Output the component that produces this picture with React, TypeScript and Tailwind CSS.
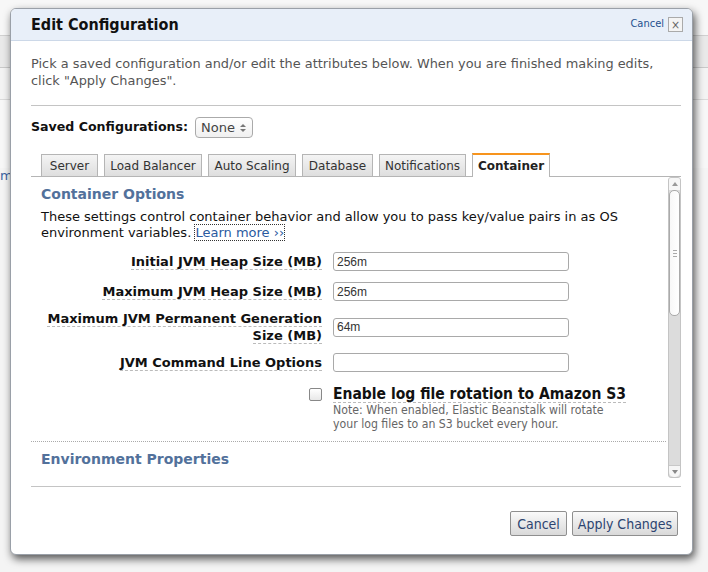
import React from "react";

const V = { fontFamily: '"DejaVu Sans", Verdana, sans-serif' };
const T = { fontFamily: '"DejaVu Sans Condensed", "DejaVu Sans", Tahoma, sans-serif', fontStretch: "condensed" as const };

function Field({ label, value, two }: { label: React.ReactNode; value: string; two?: boolean }) {
  return (
    <div className={`flex items-center ${two ? "-my-[2px]" : ""}`}>
      <div className={`w-[281px] text-right text-[13px] ${two ? "leading-[17px]" : "leading-[16px]"}`} style={V}>
        <span className="font-bold text-[#111] border-b border-dashed border-[#bbb]">{label}</span>
      </div>
      <div
        className="ml-[11px] w-[236px] h-[19px] border border-[#a9a9a9] rounded-[3px] bg-white flex items-center px-[3px] text-[12px] leading-none text-[#333]"
        style={{ fontFamily: '"Liberation Sans", Arial, sans-serif' }}
      >
        {value}
      </div>
    </div>
  );
}

function Tab({ label, w, active }: { label: string; w: number; active?: boolean }) {
  if (active)
    return (
      <div
        className="h-[24px] -mb-px flex items-center justify-center bg-white border border-[#b5b5b5] border-b-0 border-t-2 border-t-[#f7941d] text-[12px] font-bold text-[#222]"
        style={{ ...V, width: w }}
      >
        {label}
      </div>
    );
  return (
    <div
      className="h-[22px] flex items-center justify-center bg-gradient-to-b from-[#f4f4f4] to-[#dedede] border border-[#b5b5b5] border-b-0 text-[12px] text-[#333]"
      style={{ ...V, width: w }}
    >
      {label}
    </div>
  );
}

export default function App() {
  return (
    <div className="relative w-[708px] h-[572px] overflow-hidden bg-[#f4f4f4]">
      {/* background page */}
      <div className="flex flex-col">
        <div className="h-[36px] bg-[#f7f7f7] border-b border-[#d0d0d0]" />
        <div className="h-[32px] bg-[#e9e9e9] border-b border-[#c9c9c9]" />
        <div className="h-[32px] bg-[#f3f3f3] border-b border-[#dadada]" />
        <div className="h-[68px] bg-[#f7f7f7]" />
        <div className="text-[13px] text-[#3a62a0] leading-[16px]" style={V}>
          m
        </div>
      </div>

      {/* dialog */}
      <div className="absolute left-[10px] top-[8px] w-[683px] h-[547px] bg-white rounded-[6px] border border-[#9aa0a8] shadow-[2px_4px_8px_rgba(0,0,0,0.65)] overflow-hidden flex flex-col">
        <div className="h-[32px] shrink-0 bg-[#e8eff9] border-b border-[#ccd8e8] flex items-center pl-[20px] pr-[9px]">
          <div className="text-[16px] font-bold text-[#111] flex-1" style={T}>
            Edit Configuration
          </div>
          <span className="text-[11px] text-[#1f4f8f] mr-[4px]" style={T}>
            Cancel
          </span>
          <span className="w-[15px] h-[15px] border border-[#aaa] bg-[#f4f4f4] flex items-center justify-center text-[12px] leading-none text-[#666]" style={T}>
            ×
          </span>
        </div>

        <div className="pl-[20px] pr-[11px] flex flex-col flex-1">
          <p className="mt-[14px] text-[12.9px] leading-[17px] text-[#555]" style={V}>
            Pick a saved configuration and/or edit the attributes below. When you are finished making edits, click "Apply Changes".
          </p>
          <div className="mt-[16px] border-t border-[#c4c4c4]" />

          <div className="mt-[11px] flex items-center h-[21px]">
            <span className="text-[12.6px] font-bold text-[#111]" style={V}>
              Saved Configurations:
            </span>
            <div className="ml-[7px] w-[58px] h-[21px] border border-[#aaa] rounded-[4px] bg-gradient-to-b from-white to-[#f0f0f0] flex items-center pl-[5px] text-[13px] text-[#444]" style={V}>
              <span className="flex-1">None</span>
              <svg width="8" height="12" viewBox="0 0 8 12" className="mr-[5px]">
                <path d="M1 5 L4 2 L7 5 Z" fill="#777" />
                <path d="M1 7 L4 10 L7 7 Z" fill="#777" />
              </svg>
            </div>
          </div>

          <div className="mt-[16px] pl-[10px] flex items-end gap-[6px] border-b border-[#b5b5b5] h-[23px]">
            <Tab label="Server" w={57} />
            <Tab label="Load Balancer" w={98} />
            <Tab label="Auto Scaling" w={88} />
            <Tab label="Database" w={71} />
            <Tab label="Notifications" w={87} />
            <Tab label="Container" w={78} active />
          </div>

          <div className="flex h-[301px]">
            <div className="flex-1 overflow-hidden flex flex-col">
              <div className="pl-[10px] mt-[9px] text-[14px] font-bold text-[#52719b] leading-[17px]" style={V}>
                Container Options
              </div>
              <p className="pl-[10px] mt-[6px] text-[13px] leading-[16px] text-[#111]" style={V}>
                These settings control container behavior and allow you to pass key/value pairs in as OS environment variables.{" "}
                <span className="text-[#2a5aa0] outline outline-1 outline-dotted outline-[#333]">Learn more ››</span>
              </p>
              <div className="pl-[10px] mt-[11px] flex flex-col gap-[11px]">
                <Field label="Initial JVM Heap Size (MB)" value="256m" />
                <Field label="Maximum JVM Heap Size (MB)" value="256m" />
                <Field
                  label={
                    <>
                      Maximum JVM Permanent Generation
                      <br />
                      Size (MB)
                    </>
                  }
                  value="64m"
                  two
                />
                <Field label="JVM Command Line Options" value="" />
              </div>
              <div className="mt-[14px] flex pl-[278px]">
                <div className="w-[13px] h-[13px] mt-[2px] border border-[#888] rounded-[2px] bg-gradient-to-b from-white to-[#e8e8e8]" />
                <div className="ml-[11px] flex flex-col">
                  <span className="text-[15.5px] font-bold text-[#111] leading-[16px] border-b border-dashed border-[#bbb] self-start" style={T}>
                    Enable log file rotation to Amazon S3
                  </span>
                  <span className="text-[12.2px] leading-[14px] text-[#666] w-[285px]" style={T}>
                    Note: When enabled, Elastic Beanstalk will rotate your log files to an S3 bucket every hour.
                  </span>
                </div>
              </div>
              <div className="mt-[10px] mr-[2px] border-t border-dotted border-[#aaa]" />
              <div className="pl-[10px] mt-[9px] text-[14px] font-bold text-[#52719b] leading-[17px]" style={V}>
                Environment Properties
              </div>
              <p className="pl-[10px] mt-[11px] text-[13px] leading-[16px] text-[#111]" style={V}>
                Environment properties are passed in to the application as key-value pairs.
              </p>
            </div>
            {/* scrollbar */}
            <div className="w-[13px] flex flex-col border border-[#c4c4c4] rounded-[3px] bg-[#dcdcdc] overflow-hidden">
              <div className="h-[12px] bg-[#f6f6f6] flex items-center justify-center">
                <svg width="6" height="4" viewBox="0 0 6 4"><path d="M0 4 L3 0 L6 4 Z" fill="#999" /></svg>
              </div>
              <div className="h-[126px] bg-gradient-to-r from-[#f8f8f8] to-white border border-[#aaa] rounded-[5px] flex items-center justify-center">
                <div className="flex flex-col gap-[2px]">
                  <div className="w-[4px] h-px bg-[#aaa]" />
                  <div className="w-[4px] h-px bg-[#aaa]" />
                  <div className="w-[4px] h-px bg-[#aaa]" />
                </div>
              </div>
              <div className="flex-1" />
              <div className="h-[12px] bg-[#f6f6f6] rounded-b-[5px] flex items-center justify-center border-t border-[#c8c8c8]">
                <svg width="6" height="4" viewBox="0 0 6 4"><path d="M0 0 L3 4 L6 0 Z" fill="#888" /></svg>
              </div>
            </div>
          </div>

          <div className="mt-[8px] border-t border-[#c4c4c4]" />

          <div className="mt-[24px] flex justify-end gap-[5px] pr-[3px]">
            <button className="w-[57px] h-[25px] border border-[#8f8f8f] rounded-[2px] bg-gradient-to-b from-[#fafafa] to-[#d9d9d9] text-[14px] leading-none text-[#2c4470]" style={T}>
              Cancel
            </button>
            <button className="w-[106px] h-[25px] border border-[#8f8f8f] rounded-[2px] bg-gradient-to-b from-[#fafafa] to-[#d9d9d9] text-[14px] leading-none text-[#2c4470]" style={T}>
              Apply Changes
            </button>
          </div>
        </div>
      </div>
    </div>
  );
}
